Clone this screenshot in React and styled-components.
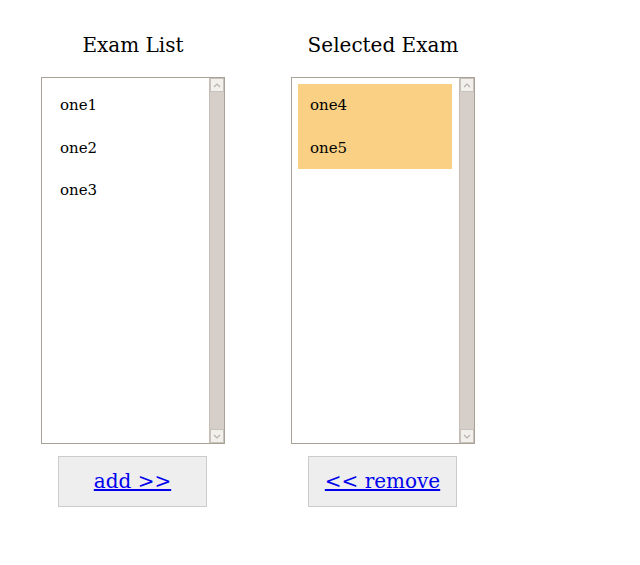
import React from "react";
import styled, { createGlobalStyle } from "styled-components";

const GlobalStyle = createGlobalStyle`
  body {
    margin: 0;
    background: #ffffff;
    font-family: "DejaVu Serif", "Liberation Serif", serif;
    color: #000000;
  }
`;

const exams = ["one1", "one2", "one3"];
const selected = ["one4", "one5"];

export default function App() {
  return (
    <>
      <GlobalStyle />
      <Page>
        <Column>
          <Title>Exam List</Title>
          <ListBox>
            <Options>
              {exams.map((e) => (
                <Option key={e}>{e}</Option>
              ))}
            </Options>
            <Scrollbar />
          </ListBox>
          <ActionButton>
            <a href="#add">add &gt;&gt;</a>
          </ActionButton>
        </Column>
        <Column>
          <Title>Selected Exam</Title>
          <ListBox>
            <Options>
              {selected.map((e) => (
                <Option key={e} $selected>
                  {e}
                </Option>
              ))}
            </Options>
            <Scrollbar />
          </ListBox>
          <ActionButton>
            <a href="#remove">&lt;&lt; remove</a>
          </ActionButton>
        </Column>
      </Page>
    </>
  );
}

// fake scrollbar, drawn to look like the old gtk one
function Scrollbar() {
  return (
    <Track>
      <Arrow>
        <svg width="8" height="5" viewBox="0 0 8 5">
          <path d="M1 4 L4 1 L7 4" fill="none" stroke="#b9b2ab" strokeWidth="1.2" />
        </svg>
      </Arrow>
      <Arrow>
        <svg width="8" height="5" viewBox="0 0 8 5">
          <path d="M1 1 L4 4 L7 1" fill="none" stroke="#b9b2ab" strokeWidth="1.2" />
        </svg>
      </Arrow>
    </Track>
  );
}

const Page = styled.div`
  display: flex;
  gap: 66px;
  padding: 33px 0 0 41px;
`;

const Column = styled.div`
  width: 184px;
  display: flex;
  flex-direction: column;
  align-items: center;
`;

const Title = styled.h2`
  margin: 0 0 20px;
  font-size: 20px;
  font-weight: normal;
  line-height: 24px;
`;

const ListBox = styled.div`
  box-sizing: border-box;
  width: 184px;
  height: 367px;
  border: 1px solid #a8a196;
  display: flex;
  background: #ffffff;
`;

const Options = styled.div`
  flex: 1;
  padding: 6px 7px 6px 6px;
  display: flex;
  flex-direction: column;
`;

const Option = styled.div`
  padding: 12px 12px;
  font-size: 15px;
  line-height: 18.5px;
  background: ${(p) => (p.$selected ? "#f9d084" : "transparent")};
`;

const Track = styled.div`
  width: 14px;
  background: #d6cec8;
  border-left: 1px solid #c4bcb5;
  display: flex;
  flex-direction: column;
  justify-content: space-between;
`;

const Arrow = styled.div`
  box-sizing: border-box;
  height: 14px;
  background: #f2f0ed;
  border: 1px solid #c9c2bb;
  display: flex;
  align-items: center;
  justify-content: center;
`;

const ActionButton = styled.div`
  box-sizing: border-box;
  margin-top: 12px;
  align-self: flex-start;
  margin-left: 17px;
  width: 149px;
  height: 51px;
  padding-bottom: 2px;
  background: #eeeeee;
  border: 1px solid #cccccc;
  display: flex;
  align-items: center;
  justify-content: center;
  font-size: 20px;

  a {
    color: #0000ee;
    text-decoration: underline;
  }
`;
